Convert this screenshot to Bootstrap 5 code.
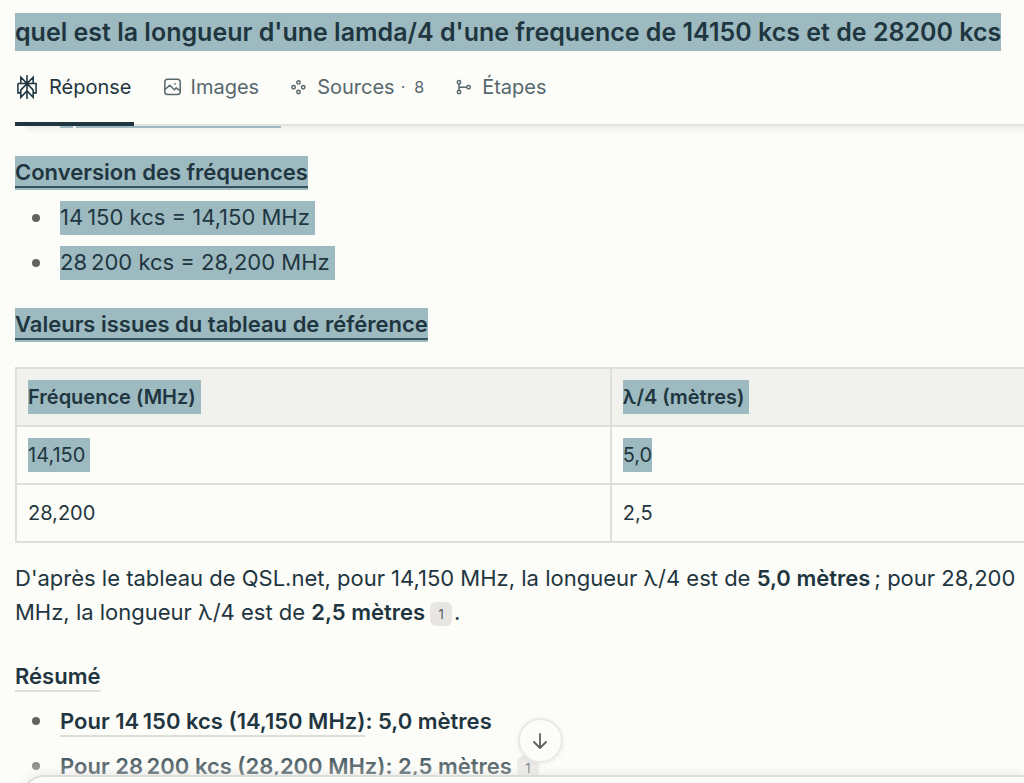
<!DOCTYPE html>
<html lang="fr">
<head>
<meta charset="utf-8">
<meta name="viewport" content="width=device-width, initial-scale=1">
<title>Longueur lambda/4</title>
<link href="https://cdn.jsdelivr.net/npm/bootstrap@5.3.0/dist/css/bootstrap.min.css" rel="stylesheet">
<style>
  :root { --paper: #fcfcf9; --ink: #1f3640; --soft: #57686d; --sel: #9dbac0; --rule: #dddfdb; }
  body { background: var(--paper); color: var(--ink); font-family: Inter, "Liberation Sans", sans-serif; font-size: 22px; line-height: 34px; }
  .page-pad { padding-left: 15px; }
  .hl { background: var(--sel); display: inline-block; vertical-align: top; }
  .hl-break { padding-right: 5px; }
  .question { font-size: 25px; line-height: 38px; font-weight: 600; padding-top: 13px; margin: 0; white-space: nowrap; }

  .tab-row { gap: 28px; height: 75px; border-bottom: 2px solid #e3e4e1; }
  .tab-row .nav-link { font-size: 20px; line-height: 34px; color: var(--soft); padding: 0 2px; gap: 10px; height: 75px; border-bottom: 4px solid transparent; }
  .tab-row .nav-link:first-child { gap: 12px; }
  .tab-row .nav-link.active { color: var(--ink); border-color: var(--ink); }
  .tab-row svg { fill: none; stroke: currentColor; }
  .tab-count { font-size: 16px; margin-left: -4px; }

  .under-header { height: 30px; }
  .under-shade { height: 7px; margin-left: 10px; border-bottom-left-radius: 12px; background: linear-gradient(#efefed, #f9f9f6); }
  .clip-line { height: 2px; padding-left: 35px; gap: 3px; }
  .clip-line span { background: var(--sel); }
  .clip-mark { width: 13px; }
  .clip-text { width: 205px; }

  .section-title { font-size: 22px; line-height: 34px; font-weight: 600; margin: 0; }
  .section-title.spaced { margin-top: 28px; }
  .section-title.after-text { margin-top: 30px; }
  .ruled { text-decoration: underline 2px #dcded9; text-underline-offset: 6px; text-decoration-skip-ink: none; }
  .ruled-dark { line-height: 32px; padding-bottom: 2px; text-decoration-color: #36505a; }
  .answer-list { list-style: none; padding-left: 45px; margin: 0; }
  .answer-list li { margin-top: 11px; }
  .answer-list li::before { content: ""; float: left; width: 8px; height: 8px; border-radius: 50%; background: #64645f; margin: 13px 0 0 -28px; }
  .answer-list .hl { line-height: 32px; padding-bottom: 2px; }
  .answer-list b, .answer-text b { font-weight: 600; }

  .answer-table { font-size: 20px; line-height: 34px; color: inherit; margin: 25px 0 18px; border: 2px solid var(--rule); border-right: 0; --bs-table-bg: transparent; --bs-table-color: var(--ink); }
  .answer-table th, .answer-table td { padding: 11px; border: 2px solid var(--rule); border-right: 0; }
  .answer-table th { font-weight: 600; background: #f1f1ed; }
  .answer-table th:first-child { width: 59%; }

  .answer-text { margin: 0; padding-right: 6px; }
  .cite { display: inline-block; width: 22px; height: 24px; border-radius: 6px; background: #e7e6e2; color: #52605f; font-size: 13px; line-height: 24px; text-align: center; text-decoration: none; vertical-align: 1px; margin: 0 2px 0 5px; }

  .dock { height: 38px; overflow: hidden; padding: 30px 0 0 22px; background: linear-gradient(#fcfcf900, #fcfcf966 28px, var(--paper)); pointer-events: none; }
  .ask-box { height: 60px; border: 2px solid #dcddd9; border-right: 0; border-radius: 22px 0 0 0; background: var(--paper); box-shadow: 0 -2px 10px #00000012; }
  .jump { padding: 0 0 20px 56px; pointer-events: none; }
  .jump .btn { width: 45px; height: 45px; border: 2px solid #e9e9e6; background: var(--paper); color: #5f5f5a; box-shadow: 0 1px 5px #0000000f; pointer-events: auto; }
</style>
</head>
<body class="vh-100 overflow-hidden">
<header class="page-pad">
  <h1 class="question"><span class="hl">quel est la longueur d'une lamda/4 d'une frequence de 14150 kcs et de 28200 kcs</span></h1>
  <nav class="nav tab-row flex-nowrap" aria-label="Vues">
    <a class="nav-link active d-flex align-items-center" href="#reponse" aria-current="page">
      <svg width="20" height="26" viewBox="1 -1 22 26" preserveAspectRatio="none" stroke-width="1.7"><path d="M12 0v24M5.2 8.5V2.2l6.8 6.3 6.8-6.3v6.3M2 8.5h20v9.3h-3.2M5.2 17.8H2V8.5M12 8.5l-6.8 6.6v7.2l6.8-6.4 6.8 6.4v-7.2z"/></svg>
      <span>Réponse</span>
    </a>
    <a class="nav-link d-flex align-items-center" href="#images">
      <svg width="17" height="18" viewBox="0 0 17 18" stroke-width="1.5" stroke-linejoin="round"><rect x=".8" y="1.2" width="15.4" height="15.4" rx="2.8"/><path d="M1 11.5l4.8-4.2 4.6 4.4 1.8-1.8 4 3"/><circle cx="11" cy="5.8" r=".9" fill="currentColor" stroke="none"/></svg>
      <span>Images</span>
    </a>
    <a class="nav-link d-flex align-items-center" href="#sources">
      <svg width="16" height="18" viewBox="0 0 16 18" stroke-width="1.5"><circle cx="7.5" cy="4.4" r="1.7"/><circle cx="2.6" cy="9.2" r="1.7"/><circle cx="12.2" cy="9.2" r="1.7"/><circle cx="7.5" cy="14" r="1.7"/></svg>
      <span>Sources</span><span class="tab-count">· &nbsp;8</span>
    </a>
    <a class="nav-link d-flex align-items-center" href="#etapes">
      <svg width="16" height="18" viewBox="0 0 16 18" stroke-width="1.5"><circle cx="3" cy="4.2" r="1.7"/><circle cx="3" cy="14" r="1.7"/><circle cx="12.6" cy="9.2" r="1.7"/><path d="M3 6v6.3M3 9.2h7.8"/></svg>
      <span>Étapes</span>
    </a>
  </nav>
</header>

<main class="page-pad" id="reponse">
  <div class="under-header">
    <div class="under-shade">
      <div class="clip-line d-flex"><span class="clip-mark"></span><span class="clip-text"></span></div>
    </div>
  </div>

  <h2 class="section-title"><span class="hl ruled ruled-dark">Conversion des fréquences</span></h2>
  <ul class="answer-list">
    <li><span class="hl hl-break">14&#8239;150 kcs = 14,150 MHz</span></li>
    <li><span class="hl hl-break">28&#8239;200 kcs = 28,200 MHz</span></li>
  </ul>

  <h2 class="section-title spaced"><span class="hl ruled ruled-dark">Valeurs issues du tableau de référence</span></h2>
  <table class="table answer-table">
    <thead>
      <tr><th scope="col"><span class="hl hl-break">Fréquence (MHz)</span></th><th scope="col"><span class="hl hl-break">λ/4 (mètres)</span></th></tr>
    </thead>
    <tbody>
      <tr><td><span class="hl hl-break">14,150</span></td><td><span class="hl">5,0</span></td></tr>
      <tr><td>28,200</td><td>2,5</td></tr>
    </tbody>
  </table>

  <p class="answer-text">D'après le tableau de QSL.net, pour 14,150 MHz, la longueur λ/4 est de <b>5,0 mètres</b>&#8239;; pour 28,200 MHz, la longueur λ/4 est de <b>2,5 mètres</b><a class="cite" href="#source-1">1</a>.</p>

  <h2 class="section-title after-text"><span class="ruled">Résumé</span></h2>
  <ul class="answer-list">
    <li><b><span class="ruled">Pour 14&#8239;150 kcs (14,150 MHz)</span>: 5,0 mètres</b></li>
    <li><b><span class="ruled">Pour 28&#8239;200 kcs (28,200 MHz)</span>: 2,5 mètres</b><a class="cite" href="#source-1">1</a></li>
  </ul>
</main>

<div class="fixed-bottom dock"><div class="ask-box"></div></div>
<div class="fixed-bottom jump d-flex justify-content-center">
  <button type="button" class="btn rounded-circle p-0 d-flex align-items-center justify-content-center" aria-label="Aller en bas">
    <svg width="16" height="18" viewBox="0 0 16 18" fill="none" stroke="currentColor" stroke-width="1.8" stroke-linecap="round" stroke-linejoin="round"><path d="M8 2v14M2 10l6 6 6-6"/></svg>
  </button>
</div>
<script src="https://cdn.jsdelivr.net/npm/bootstrap@5.3.0/dist/js/bootstrap.bundle.min.js"></script>
</body>
</html>
